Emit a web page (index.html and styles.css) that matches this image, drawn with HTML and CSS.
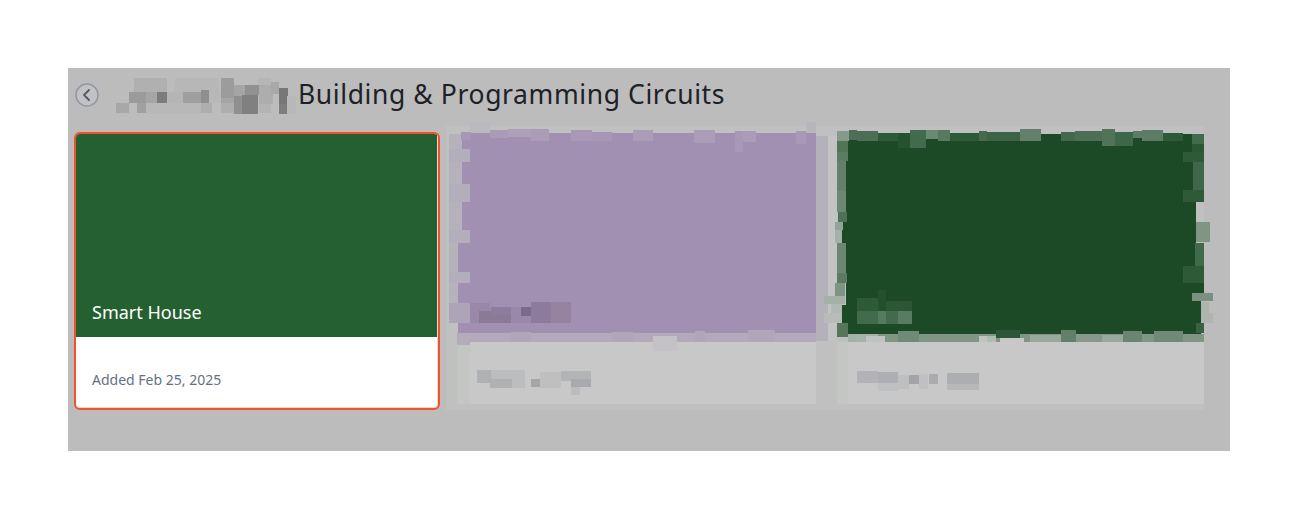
FILE: index.html
```html
<!DOCTYPE html>
<html lang="en">
<head>
	<meta charset="UTF-8">
	<title>Building &amp; Programming Circuits</title>
	<link rel="stylesheet" href="styles.css">
</head>
<body>
<div class="panel">
	<div class="header">
		<a class="back">
			<svg width="24" height="24" viewBox="0 0 24 24" fill="none" stroke="#4d5a6e">
				<circle cx="12" cy="12" r="11" stroke="#8f98a6" stroke-width="1.5" fill="#c2c2c2"/>
				<path d="M14 7l-5 5 5 5" stroke-width="1.8" stroke-linecap="round" stroke-linejoin="round"/>
			</svg>
		</a>
		<svg class="blur-name" width="182" height="36" viewBox="114 78 182 36">
			<rect x="133" y="78" width="33" height="14" fill="#b0b0b0"/>
			<rect x="174" y="78" width="44" height="14" fill="#b7b7b7"/>
			<rect x="257" y="78" width="13" height="7" fill="#b6b6b6"/>
			<rect x="220" y="78" width="13" height="20" fill="#9c9c9c"/>
			<rect x="128" y="92" width="17" height="11" fill="#9b9b9b"/>
			<rect x="145" y="92" width="11" height="11" fill="#a5a5a5"/>
			<rect x="156" y="92" width="10" height="11" fill="#7c7c7c"/>
			<rect x="166" y="92" width="16" height="11" fill="#b5b5b5"/>
			<rect x="182" y="92" width="18" height="11" fill="#9f9f9f"/>
			<rect x="200" y="90" width="8" height="13" fill="#8f8f8f"/>
			<rect x="208" y="92" width="12" height="11" fill="#b8b8b8"/>
			<rect x="233" y="85" width="11" height="11" fill="#a5a5a5"/>
			<rect x="220" y="98" width="13" height="5" fill="#a5a5a5"/>
			<rect x="244" y="85" width="14" height="10" fill="#919191"/>
			<rect x="258" y="85" width="14" height="19" fill="#adadad"/>
			<rect x="270" y="82" width="8" height="12" fill="#a8a8a8"/>
			<rect x="278" y="88" width="9" height="16" fill="#777"/>
			<rect x="115" y="103" width="13" height="10" fill="#a8a8a8"/>
			<rect x="136" y="103" width="9" height="10" fill="#a0a0a0"/>
			<rect x="145" y="103" width="55" height="11" fill="#b8b8b8"/>
			<rect x="200" y="103" width="11" height="10" fill="#aeaeae"/>
			<rect x="220" y="103" width="13" height="10" fill="#aeaeae"/>
			<rect x="233" y="96" width="8" height="18" fill="#8f8f8f"/>
			<rect x="241" y="95" width="16" height="19" fill="#808080"/>
			<rect x="258" y="104" width="12" height="9" fill="#b4b4b4"/>
			<rect x="278" y="104" width="8" height="10" fill="#7e7e7e"/>
			<rect x="286" y="96" width="9" height="18" fill="#b8b8b8"/>
		</svg>
		<h1 class="title">Building &amp; Programming Circuits</h1>
	</div>
	<div class="cards">
		<div class="card">
			<div class="card-top"><span class="card-name">Smart House</span></div>
			<div class="card-bottom">Added Feb 25, 2025</div>
		</div>
		<svg class="card-blur" width="777" height="290" viewBox="446 122 777 290">
			<!-- soft halo round both cards -->
			<rect x="446" y="126" width="758" height="284" fill="#bfc0bf"/>
			<rect x="449" y="134" width="13" height="170" fill="#b6b2bc"/>
			<rect x="816" y="136" width="12" height="205" fill="#b5b1bb"/>
			<rect x="828" y="136" width="9" height="205" fill="#c2c3c2"/>
			<rect x="470" y="122" width="20" height="14" fill="#bbb9bf"/>
			<rect x="806" y="122" width="10" height="14" fill="#b8b5bd"/>
			<!-- purple card body -->
			<rect x="462" y="133" width="354" height="205" fill="#a190b2"/>
			<rect x="458" y="230" width="4" height="108" fill="#a190b2"/>
			<rect x="449" y="149" width="21" height="13" fill="#b3aebb"/>
			<rect x="449" y="184" width="21" height="18" fill="#b3aebb"/>
			<rect x="449" y="230" width="21" height="13" fill="#b3aebb"/>
			<rect x="449" y="272" width="21" height="11" fill="#b3aebb"/>
			<rect x="449" y="303" width="21" height="20" fill="#aea4b8"/>
			<!-- fringe on the top edge -->
			<rect x="461" y="132" width="10" height="8" fill="#a898b6"/>
			<rect x="490" y="130" width="18" height="8" fill="#aa9cb8"/>
			<rect x="508" y="129" width="23" height="8" fill="#ae9fbb"/>
			<rect x="531" y="129" width="18" height="12" fill="#ab9db8"/>
			<rect x="571" y="130" width="21" height="11" fill="#a999b7"/>
			<rect x="592" y="132" width="20" height="9" fill="#a797b4"/>
			<rect x="633" y="130" width="20" height="11" fill="#ab9db8"/>
			<rect x="694" y="130" width="21" height="13" fill="#ab9db8"/>
			<rect x="735" y="131" width="8" height="21" fill="#a898b6"/>
			<rect x="743" y="131" width="13" height="11" fill="#ab9db8"/>
			<rect x="796" y="131" width="10" height="13" fill="#a999b7"/>
			<!-- fringe on the bottom edge -->
			<rect x="457" y="333" width="13" height="12" fill="#b3adbb"/>
			<rect x="470" y="333" width="346" height="9" fill="#b3a9bb"/>
			<rect x="511" y="332" width="20" height="10" fill="#b0a5b9"/>
			<rect x="612" y="332" width="21" height="10" fill="#b0a5b9"/>
			<rect x="695" y="331" width="10" height="11" fill="#b0a5b9"/>
			<rect x="748" y="330" width="27" height="12" fill="#b0a5b9"/>
			<!-- blurred card name -->
			<rect x="470" y="303" width="20" height="20" fill="#9a88a8"/>
			<rect x="479" y="311" width="32" height="12" fill="#8a7a98"/>
			<rect x="491" y="307" width="20" height="8" fill="#8d7c9c"/>
			<rect x="511" y="307" width="22" height="16" fill="#9a88a9"/>
			<rect x="521" y="307" width="10" height="9" fill="#7b6a88"/>
			<rect x="531" y="302" width="20" height="21" fill="#8c7b9b"/>
			<rect x="551" y="302" width="20" height="21" fill="#9583a0"/>
			<!-- lower white part -->
			<rect x="470" y="342" width="346" height="62" fill="#c8c8c8"/>
			<rect x="457" y="345" width="13" height="59" fill="#c4c6c4"/>
			<rect x="653" y="336" width="24" height="15" fill="#c4c2c6"/>
			<!-- blurred date -->
			<rect x="477" y="370" width="14" height="13" fill="#b0b1b3"/>
			<rect x="491" y="370" width="34" height="18" fill="#bcbdbe"/>
			<rect x="490" y="379" width="22" height="9" fill="#b0b1b3"/>
			<rect x="531" y="379" width="9" height="8" fill="#a4a6aa"/>
			<rect x="540" y="372" width="21" height="16" fill="#bfbfc0"/>
			<rect x="561" y="371" width="30" height="10" fill="#b3b4b5"/>
			<rect x="571" y="379" width="20" height="8" fill="#a9aaad"/>
			<rect x="571" y="387" width="9" height="8" fill="#bbbcbd"/>

			<!-- green card body -->
			<rect x="846" y="134" width="347" height="202" fill="#1c4a26"/>
			<rect x="1193" y="202" width="3" height="133" fill="#1c4a26"/>
			<rect x="1196" y="283" width="8" height="10" fill="#1c4a26"/>
			<rect x="1196" y="293" width="5" height="42" fill="#1c4a26"/>
			<rect x="842" y="305" width="4" height="31" fill="#1c4a26"/>
			<rect x="842" y="222" width="4" height="21" fill="#1c4a26"/>
			<!-- fringe on the top edge -->
			<rect x="837" y="131" width="12" height="10" fill="#88998b"/>
			<rect x="849" y="130" width="8" height="10" fill="#4e6f56"/>
			<rect x="857" y="131" width="21" height="10" fill="#4c6e54"/>
			<rect x="878" y="133" width="20" height="8" fill="#2f5a38"/>
			<rect x="898" y="133" width="12" height="15" fill="#27522f"/>
			<rect x="910" y="130" width="16" height="18" fill="#426a4c"/>
			<rect x="926" y="130" width="12" height="9" fill="#6c8873"/>
			<rect x="938" y="130" width="12" height="11" fill="#577a60"/>
			<rect x="950" y="133" width="29" height="8" fill="#2f5a38"/>
			<rect x="979" y="131" width="8" height="10" fill="#44694d"/>
			<rect x="987" y="132" width="33" height="9" fill="#3c6345"/>
			<rect x="1020" y="129" width="21" height="12" fill="#647f6b"/>
			<rect x="1061" y="132" width="14" height="9" fill="#43684c"/>
			<rect x="1075" y="131" width="27" height="10" fill="#4c6e54"/>
			<rect x="1102" y="129" width="13" height="17" fill="#517458"/>
			<rect x="1115" y="132" width="18" height="14" fill="#3f6648"/>
			<rect x="1133" y="131" width="9" height="7" fill="#5c7c65"/>
			<rect x="1142" y="130" width="21" height="11" fill="#5c7c65"/>
			<rect x="1163" y="133" width="20" height="8" fill="#2f5a38"/>
			<rect x="1192" y="134" width="12" height="10" fill="#426a4c"/>
			<rect x="1192" y="144" width="12" height="8" fill="#2c5635"/>
			<rect x="1183" y="152" width="21" height="10" fill="#2f5a38"/>
			<rect x="1193" y="162" width="11" height="28" fill="#3f6648"/>
			<rect x="1183" y="190" width="21" height="12" fill="#2f5a38"/>
			<!-- left side fringe -->
			<rect x="837" y="141" width="11" height="11" fill="#527457"/>
			<rect x="837" y="152" width="11" height="9" fill="#5b7b62"/>
			<rect x="837" y="161" width="9" height="30" fill="#647f6b"/>
			<rect x="837" y="191" width="9" height="21" fill="#6c8873"/>
			<rect x="838" y="212" width="9" height="10" fill="#4f7058"/>
			<rect x="835" y="222" width="8" height="8" fill="#93a39a"/>
			<rect x="835" y="230" width="7" height="13" fill="#a3b1a8"/>
			<rect x="837" y="243" width="9" height="30" fill="#6b8672"/>
			<rect x="837" y="273" width="10" height="10" fill="#5c7b63"/>
			<rect x="835" y="283" width="10" height="13" fill="#7e9586"/>
			<rect x="824" y="296" width="21" height="8" fill="#a3b1a8"/>
			<rect x="831" y="304" width="11" height="9" fill="#b0b9b3"/>
			<rect x="824" y="313" width="18" height="10" fill="#b8bcb8"/>
			<rect x="837" y="323" width="11" height="14" fill="#567659"/>
			<!-- right side fringe -->
			<rect x="1196" y="222" width="14" height="20" fill="#7f9685"/>
			<rect x="1195" y="243" width="9" height="23" fill="#416a4b"/>
			<rect x="1183" y="266" width="21" height="17" fill="#2f5a38"/>
			<rect x="1192" y="293" width="21" height="8" fill="#7a9080"/>
			<rect x="1201" y="302" width="8" height="11" fill="#acb4ae"/>
			<rect x="1201" y="313" width="12" height="10" fill="#aeb5b0"/>
			<rect x="1196" y="323" width="8" height="10" fill="#39603f"/>
			<!-- blurred card name -->
			<rect x="857" y="298" width="21" height="13" fill="#2f5a38"/>
			<rect x="878" y="290" width="8" height="21" fill="#24502d"/>
			<rect x="886" y="301" width="26" height="10" fill="#2c5635"/>
			<rect x="857" y="311" width="21" height="13" fill="#426a4c"/>
			<rect x="878" y="311" width="8" height="13" fill="#567a60"/>
			<rect x="886" y="311" width="12" height="13" fill="#426a4c"/>
			<rect x="898" y="311" width="14" height="13" fill="#5a7b63"/>
			<!-- fringe on the bottom edge -->
			<rect x="848" y="334" width="356" height="8" fill="#7f9685"/>
			<rect x="848" y="334" width="30" height="10" fill="#a3b1a8"/>
			<rect x="857" y="334" width="9" height="16" fill="#a6b3aa"/>
			<rect x="866" y="336" width="19" height="10" fill="#c0c3c0"/>
			<rect x="898" y="331" width="21" height="11" fill="#6f8b78"/>
			<rect x="979" y="336" width="8" height="17" fill="#c0c3c0"/>
			<rect x="987" y="336" width="9" height="7" fill="#b0bbb3"/>
			<rect x="996" y="330" width="24" height="8" fill="#2c5635"/>
			<rect x="1030" y="335" width="31" height="8" fill="#98a89d"/>
			<rect x="1061" y="330" width="15" height="12" fill="#627f6a"/>
			<rect x="1076" y="334" width="26" height="8" fill="#86998c"/>
			<rect x="1102" y="335" width="21" height="7" fill="#98a89d"/>
			<rect x="1123" y="331" width="19" height="11" fill="#6a8672"/>
			<rect x="1154" y="331" width="29" height="11" fill="#6f8b78"/>
			<!-- lower white part -->
			<rect x="848" y="342" width="356" height="62" fill="#c8c8c8"/>
			<rect x="837" y="342" width="11" height="62" fill="#c4c6c4"/>
			<rect x="1000" y="338" width="24" height="4" fill="#c8c8c8"/>
			<!-- blurred date -->
			<rect x="857" y="371" width="21" height="12" fill="#b3b3b7"/>
			<rect x="878" y="372" width="20" height="11" fill="#aeafb2"/>
			<rect x="878" y="383" width="20" height="8" fill="#bfc0c1"/>
			<rect x="898" y="375" width="11" height="14" fill="#bebfc0"/>
			<rect x="909" y="375" width="10" height="9" fill="#a3a4a8"/>
			<rect x="919" y="374" width="9" height="15" fill="#c0c0c2"/>
			<rect x="929" y="374" width="9" height="10" fill="#aaabae"/>
			<rect x="947" y="373" width="32" height="11" fill="#adaeb1"/>
			<rect x="947" y="384" width="32" height="6" fill="#b8b9bb"/>
		</svg>
	</div>
</div>
</body>
</html>
```

FILE: styles.css
```css
*{margin: 0;padding: 0;box-sizing: border-box;}
body{
	background:#fff;
	padding:68px 68px 0;
	font-family:"Noto Sans","DejaVu Sans",sans-serif;
}
.panel{
	width:1162px;
	height:383px;
	background:#bcbcbc;
	overflow:hidden;
}
.header{
	height:54px;
	padding-left:7px;
	display:flex;
	align-items:center;
}
.back{
	width:24px;
	height:24px;
	display:block;
}
.back svg{
	display:block;
}
.blur-name{
	display:block;
	flex:none;
	margin-left:16px;
	margin-top:2px;
}
.title{
	margin-left:1px;
	margin-top:-2px;
	font-size:26.5px;
	font-weight:400;
	line-height:36px;
	letter-spacing:0.6px;
	color:#1d2127;
	white-space:nowrap;
}
.cards{
	display:flex;
	align-items:flex-start;
	padding-left:6px;
}
.card{
	width:366px;
	height:278px;
	margin-top:10px;
	flex:none;
	border:2px solid #f4502a;
	border-radius:6px;
	background:#fff;
	overflow:hidden;
	box-shadow:inset -1px -1px 1px rgba(0,0,0,.15);
}
.card-top{
	height:203px;
	margin-right:1px;
	background:#256030;
	display:flex;
	align-items:flex-end;
	padding:0 16px 13px;
}
.card-name{
	font-size:18px;
	line-height:24px;
	color:#fff;
}
.card-bottom{
	padding:33px 16px 0;
	font-size:14px;
	line-height:20px;
	color:#667085;
}
.card-blur{
	display:block;
	flex:none;
	margin-left:6px;
}
```
